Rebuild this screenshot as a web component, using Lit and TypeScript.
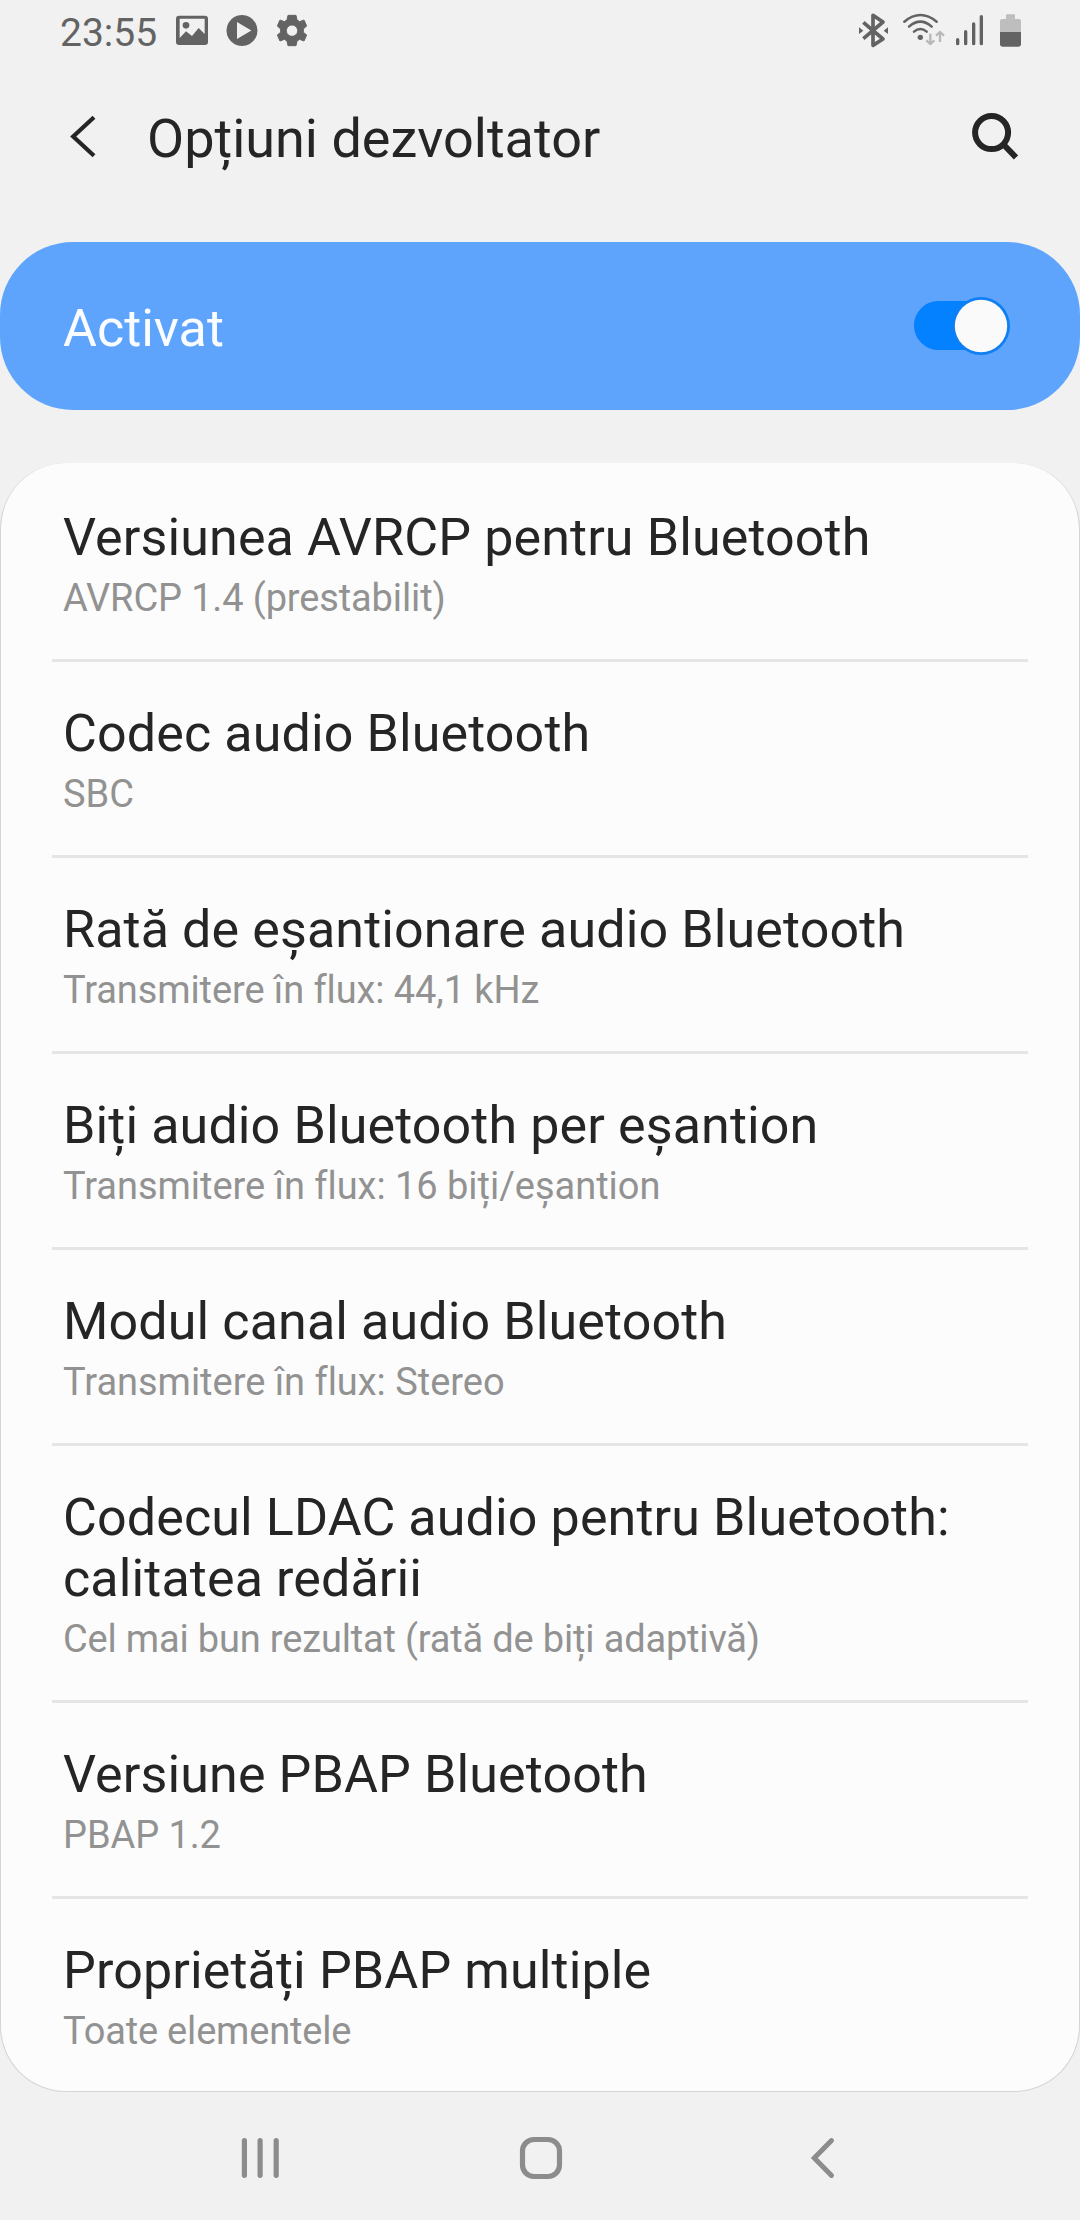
import { LitElement, html, css, svg } from "lit";
import { customElement, property } from "lit/decorators.js";
import { styleMap } from "lit/directives/style-map.js";

interface Setting {
  title: string;
  summary: string;
  /** Letter spacing of the summary line, in pixels. */
  tracking: number;
}

const SETTINGS: Setting[] = [
  { title: "Versiunea AVRCP pentru Bluetooth", summary: "AVRCP 1.4 (prestabilit)", tracking: -0.13 },
  { title: "Codec audio Bluetooth", summary: "SBC", tracking: 0 },
  { title: "Rată de eșantionare audio Bluetooth", summary: "Transmitere în flux: 44,1 kHz", tracking: -0.09 },
  { title: "Biți audio Bluetooth per eșantion", summary: "Transmitere în flux: 16 biți/eșantion", tracking: -0.03 },
  { title: "Modul canal audio Bluetooth", summary: "Transmitere în flux: Stereo", tracking: -0.02 },
  { title: "Codecul LDAC audio pentru Bluetooth: calitatea redării", summary: "Cel mai bun rezultat (rată de biți adaptivă)", tracking: -0.17 },
  { title: "Versiune PBAP Bluetooth", summary: "PBAP 1.2", tracking: -0.09 },
  { title: "Proprietăți PBAP multiple", summary: "Toate elementele", tracking: -0.18 },
];

@customElement("status-bar")
class StatusBar extends LitElement {
  static styles = css`
    :host {
      display: flex;
      justify-content: space-between;
      height: 62px;
      color: #636363;
    }
    .group { display: flex; }
    .clock {
      width: 114px;
      padding-left: 60px;
      font-size: 39px;
      line-height: 46px;
      padding-top: 10px;
      white-space: nowrap;
    }
    svg { display: block; height: 62px; }
    .notices { width: 140px; }
    .signals { width: 240px; }
  `;
  render() {
    return html`
      <div class="group">
        <div class="clock">23:55</div>
        <svg class="notices" viewBox="402 0 420 186" fill="#636363">
          <path fill-rule="evenodd" d="M417 47H495Q504 47 504 56V126Q504 135 495 135H417Q408 135 408 126V56Q408 47 417 47ZM419 56V114L438 94L456 108L476 84L494 102V56Z" />
          <circle cx="438" cy="76" r="10" />
          <path fill-rule="evenodd" d="M606 45A46.500 46.500 0 1 1 605.900 45ZM591 66V117L634 91.500Z" />
          <path fill-rule="evenodd" stroke="#636363" stroke-width="3" stroke-linejoin="round" d="M744 46H768L771 60L779 65L792 60L800 78L790 87V97L800 105L792 123L779 118L771 123L768 137H744L741 123L733 118L720 123L712 105L722 97V87L712 78L720 60L733 65L741 60ZM756 75A17 17 0 1 0 756.100 75Z" />
        </svg>
      </div>
      <svg class="signals" viewBox="0 0 720 186" fill="none">
        <path d="M70 67L129 117L99 136V46L129 66L70 116" stroke="#636363" stroke-width="11" stroke-linejoin="round" />
        <path d="M57 82L70 92L57 102ZM144 82L131 92L144 102Z" fill="#636363" />
        <g stroke="#636363" stroke-width="7.500" stroke-linecap="round">
          <path d="M193 65Q241 25 290 65M207 80Q241 50 275 80M222 95Q241 79 260 95" />
        </g>
        <circle cx="241" cy="112" r="8" fill="#636363" />
        <g stroke="#b8b8b8" stroke-width="7">
          <path d="M271 101V131M259 121L271 132L283 121M300 126V96M288 107L300 96L312 107" />
        </g>
        <g stroke="#636363" stroke-width="10" stroke-linecap="round">
          <path d="M353 119V131M377 95V131M401 72V131M424 50V131" />
        </g>
        <path d="M501 43H522Q525 43 525 46V57H537Q543 57 543 63V97H480V63Q480 57 486 57H498V46Q498 43 501 43Z" fill="#bebebe" />
        <path d="M480 96H543V133Q543 140 536 140H487Q480 140 480 133Z" fill="#636363" />
      </svg>
    `;
  }
}

@customElement("title-bar")
class TitleBar extends LitElement {
  @property() heading = "";
  static styles = css`
    :host {
      display: flex;
      height: 148px;
      padding: 0 58px 0 66px;
      color: #252525;
    }
    .back { width: 34px; height: 148px; }
    .heading {
      flex: 1;
      margin: 0;
      padding: 45px 0 0 47px;
      font-size: 54px;
      font-weight: 400;
      line-height: 64px;
      white-space: nowrap;
    }
    .search { width: 54px; height: 148px; }
  `;
  render() {
    return html`
      <svg class="back" viewBox="0 0 34 148" fill="none" stroke="#252525" stroke-width="4.200">
        <path d="M28 55.200L7.200 74.500L28 93.800" />
      </svg>
      <h1 class="heading">${this.heading}</h1>
      <svg class="search" viewBox="0 0 54 148" fill="none" stroke="#252525" stroke-width="6">
        <circle cx="23.600" cy="70.600" r="16.500" />
        <path d="M36 83L48 95.500" />
      </svg>
    `;
  }
}

@customElement("master-switch")
class MasterSwitch extends LitElement {
  @property() label = "";
  static styles = css`
    :host {
      display: flex;
      align-items: center;
      justify-content: space-between;
      box-sizing: border-box;
      height: 168px;
      padding: 0 70px 0 63px;
      border-radius: 73px;
      background: #5ea4fd;
      color: #fafcff;
    }
    .label { font-size: 52px; line-height: 61px; padding-top: 5px; }
    .toggle { width: 97px; height: 60px; }
  `;
  render() {
    return html`
      <span class="label">${this.label}</span>
      <svg class="toggle" viewBox="0 0 97 60">
        <rect x="1" y="5" width="88" height="49" rx="24.500" fill="#0381fe" />
        <circle cx="68" cy="30" r="29" fill="#0f7ff3" />
        <circle cx="68" cy="30" r="26.200" fill="#fafafa" />
      </svg>
    `;
  }
}

@customElement("setting-row")
class SettingRow extends LitElement {
  @property() heading = "";
  @property() summary = "";
  @property({ type: Number }) tracking = 0;
  static styles = css`
    :host {
      display: block;
      padding: 44px 62px 39px;
    }
    .heading { font-size: 52px; line-height: 61px; letter-spacing: 0.12px; color: #252525; }
    .summary { margin-top: 8px; font-size: 38px; line-height: 44px; color: #929292; }
  `;
  render() {
    return html`
      <div class="heading">${this.heading}</div>
      <div class="summary" style=${styleMap({ letterSpacing: `${this.tracking}px` })}>${this.summary}</div>
    `;
  }
}

@customElement("nav-bar")
class NavBar extends LitElement {
  static styles = css`
    :host {
      display: grid;
      grid-template-columns: repeat(3, 44px);
      column-gap: 236px;
      justify-content: center;
      align-items: center;
      height: 128px;
      padding: 4px 0 0 2px;
      box-sizing: border-box;
    }
    svg { width: 44px; height: 44px; overflow: visible; }
  `;
  render() {
    const icons = [
      svg`<path d="M5.400 4.700V39.300M21.100 4.700V39.300M37.200 4.700V39.300" stroke-width="5.200" />`,
      svg`<rect x="3.500" y="3.500" width="37" height="37" rx="11.500" stroke-width="5.200" />`,
      svg`<path d="M32.500 4.600L15.300 22L32.500 39.400" stroke-width="5" />`,
    ];
    return icons.map(
      (icon) => html`<svg viewBox="0 0 44 44" fill="none" stroke="#8c8c8c" stroke-linecap="round">${icon}</svg>`
    );
  }
}

@customElement("app-root")
class AppRoot extends LitElement {
  static styles = css`
    :host {
      display: flex;
      flex-direction: column;
      width: 1080px;
      height: 2220px;
      overflow: hidden;
      background: #f1f1f1;
      font-family: Roboto, "Noto Sans", sans-serif;
    }
    .header { margin-bottom: 32px; }
    .list {
      box-sizing: border-box;
      height: 1629px;
      margin-top: 53px;
      border: 1px solid #d5d5d5;
      border-top: 0;
      border-radius: 66px;
      background: #fcfcfc;
    }
    .divider { height: 3px; margin: 0 51px -3px; background: #e5e5e5; }
  `;
  render() {
    return html`
      <status-bar></status-bar>
      <title-bar class="header" heading="Opțiuni dezvoltator"></title-bar>
      <master-switch label="Activat"></master-switch>
      <div class="list">
        ${SETTINGS.map(
          (item, i) => html`
            ${i > 0 ? html`<div class="divider"></div>` : ""}
            <setting-row .heading=${item.title} .summary=${item.summary} .tracking=${item.tracking}></setting-row>
          `
        )}
      </div>
      <nav-bar></nav-bar>
    `;
  }
}
